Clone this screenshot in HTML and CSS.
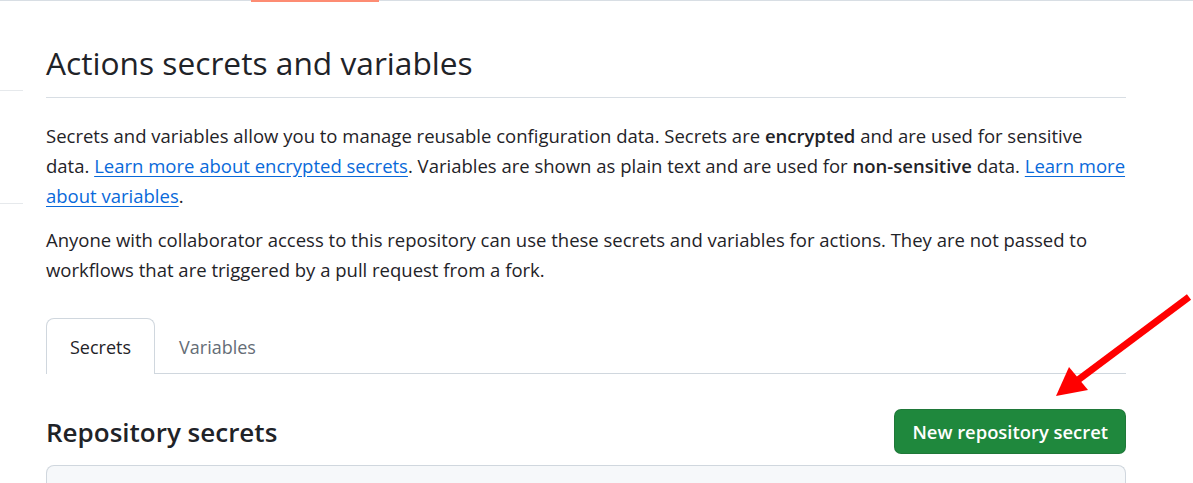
FILE: index.html
```html
<!DOCTYPE html>
<html lang="en">
<head>
<meta charset="utf-8">
<title>Actions secrets and variables</title>
<link rel="stylesheet" href="styles.css">
</head>
<body>
<header class="topbar"><span class="topbar-active"></span></header>
<div class="layout">
  <aside class="sidebar">
    <div class="side-sep side-sep-1"></div>
    <div class="side-sep side-sep-2"></div>
  </aside>
  <main class="main">
    <h1 class="page-title">Actions secrets and variables</h1>
    <p class="desc">Secrets and variables allow you to manage reusable configuration data. Secrets are <strong>encrypted</strong> and are used for sensitive data. <a href="#">Learn more about encrypted secrets</a>. Variables are shown as plain text and are used for <strong>non-sensitive</strong> data. <a href="#">Learn more about variables</a>.</p>
    <p class="desc">Anyone with collaborator access to this repository can use these secrets and variables for actions. They are not passed to workflows that are triggered by a pull request from a fork.</p>
    <nav class="tabs">
      <a class="tab tab-selected" href="#">Secrets</a>
      <a class="tab" href="#">Variables</a>
    </nav>
    <div class="section-head">
      <h2 class="section-title">Repository secrets</h2>
      <button class="btn-primary" type="button">New repository secret</button>
    </div>
    <div class="secrets-box"></div>
  </main>
</div>
<svg class="annotation" width="1193" height="483" viewBox="0 0 1193 483" aria-hidden="true">
  <line x1="1189" y1="297" x2="1074" y2="383" stroke="#ff0000" stroke-width="7"/>
  <polygon points="1056,396 1069,367 1088,390" fill="#ff0000"/>
</svg>
</body>
</html>
```

FILE: styles.css
```css
* { box-sizing: border-box; }
html, body { margin: 0; padding: 0; background: #ffffff; }
body {
  font-family: "Open Sans", "Noto Sans", sans-serif;
  color: #1f2328;
  width: 1193px;
  height: 483px;
  overflow: hidden;
  position: relative;
}
.topbar {
  display: flex;
  height: 1px;
  background: #d8dee4;
}
.topbar-active {
  margin-left: 251px;
  width: 128px;
  height: 2px;
  background: #fd8c73;
}
.layout {
  display: grid;
  grid-template-columns: 23px 1080px;
  column-gap: 23px;
}
.side-sep { height: 1px; background: #e6e9ec; }
.side-sep-1 { margin-top: 89px; }
.side-sep-2 { margin-top: 112px; }
.main { padding-top: 38px; }
.page-title {
  margin: 0;
  font-size: 31.7px;
  font-weight: 400;
  line-height: 48px;
  padding-bottom: 10px;
  border-bottom: 1px solid #d8dee4;
}
.desc {
  margin: 23px 0 0;
  font-size: 18.5px;
  line-height: 30px;
}
.desc + .desc { margin-top: 14px; }
.desc strong { font-weight: 600; }
.desc a {
  color: #0969da;
  text-decoration: underline;
  text-underline-offset: 3px;
}
.tabs {
  display: flex;
  margin-top: 33px;
  border-bottom: 1px solid #d0d7de;
}
.tab {
  display: block;
  padding: 0 23px;
  height: 56px;
  line-height: 56px;
  font-size: 18px;
  color: #656d76;
  text-decoration: none;
  border: 1px solid transparent;
  border-bottom: 0;
  border-radius: 8px 8px 0 0;
  margin-bottom: -1px;
}
.tab-selected {
  color: #1f2328;
  border-color: #d0d7de;
  background: #ffffff;
}
.section-head {
  display: flex;
  justify-content: space-between;
  align-items: center;
  margin-top: 35px;
}
.section-title {
  margin: 0;
  font-size: 26px;
  font-weight: 600;
  line-height: 40px;
}
.btn-primary {
  font-family: inherit;
  font-size: 18.4px;
  font-weight: 600;
  color: #ffffff;
  background: #1f883d;
  border: 1px solid rgba(31, 35, 40, 0.15);
  border-radius: 7px;
  height: 45px;
  padding: 0 17px;
  cursor: pointer;
}
.secrets-box {
  margin-top: 11px;
  height: 18px;
  background: #f6f8fa;
  border: 1px solid #d0d7de;
  border-bottom: 0;
  border-radius: 8px 8px 0 0;
}
.annotation {
  position: absolute;
  top: 0;
  left: 0;
  pointer-events: none;
}
```
